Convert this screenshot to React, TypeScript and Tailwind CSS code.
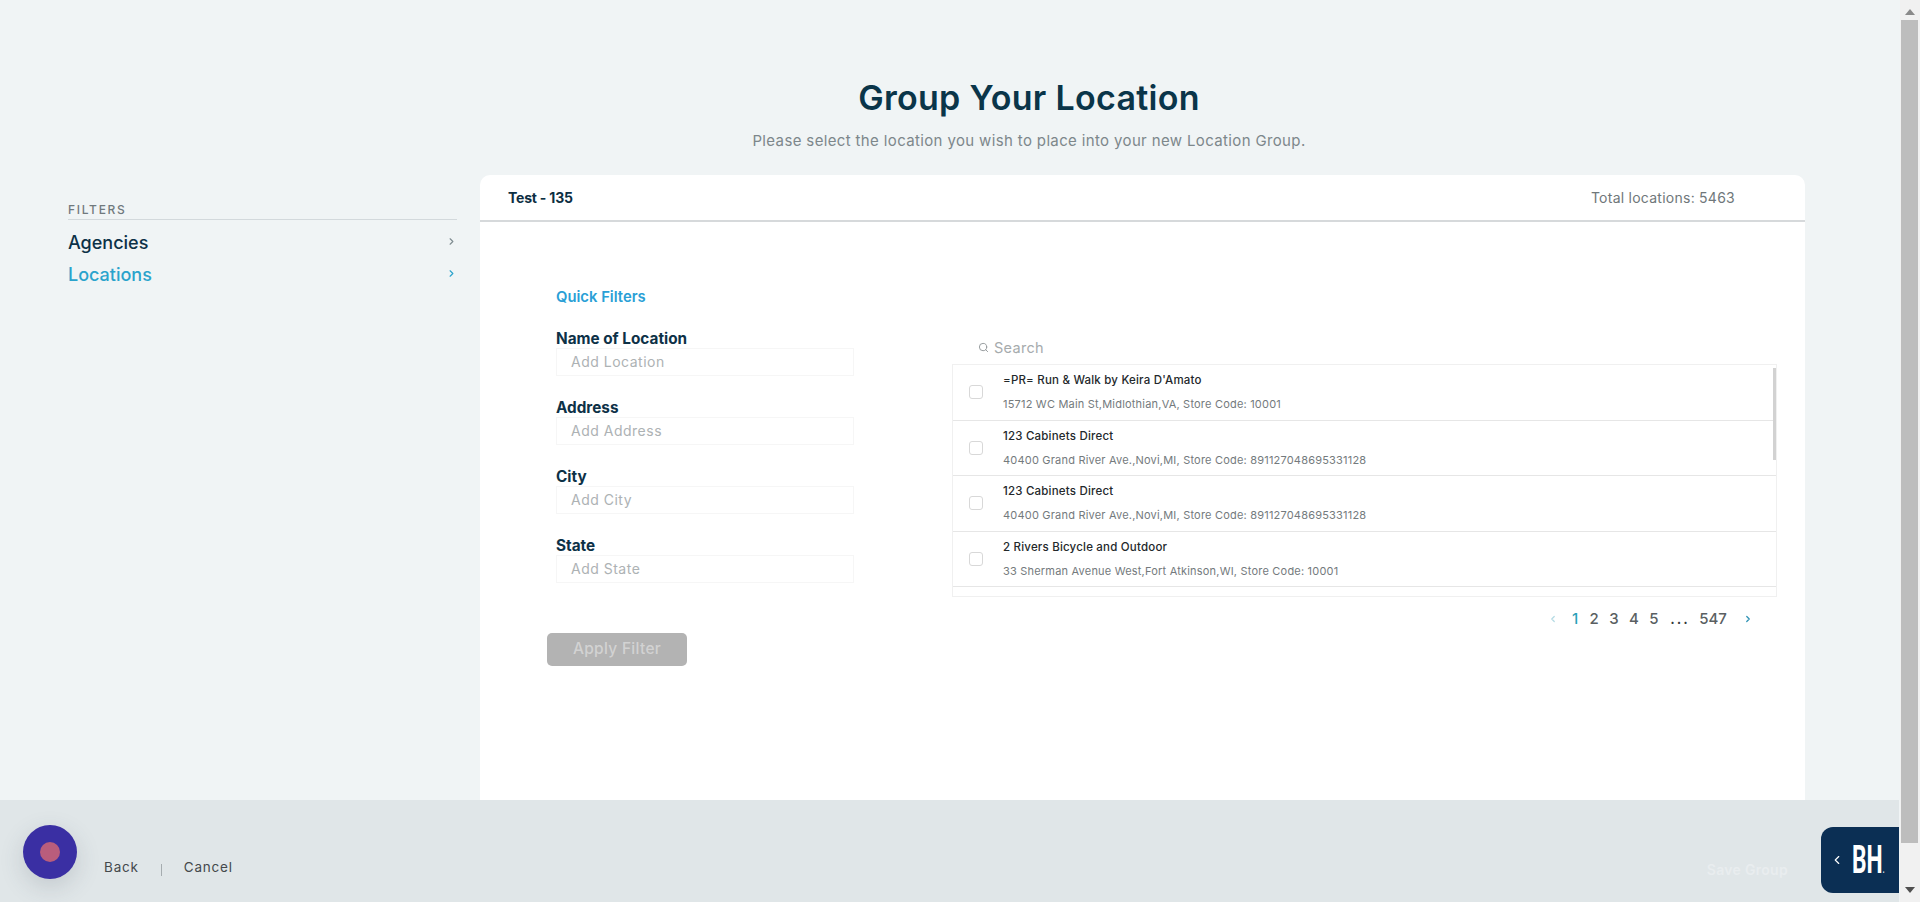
import { ChevronLeft, ChevronRight, Search } from 'lucide-react';

const rows = [
  { name: "=PR= Run & Walk by Keira D'Amato", address: '15712 WC Main St,Midlothian,VA, Store Code: 10001' },
  { name: '123 Cabinets Direct', address: '40400 Grand River Ave.,Novi,MI, Store Code: 891127048695331128' },
  { name: '123 Cabinets Direct', address: '40400 Grand River Ave.,Novi,MI, Store Code: 891127048695331128' },
  { name: '2 Rivers Bicycle and Outdoor', address: '33 Sherman Avenue West,Fort Atkinson,WI, Store Code: 10001' },
];

const filters = [
  { label: 'Name of Location', placeholder: 'Add Location' },
  { label: 'Address', placeholder: 'Add Address' },
  { label: 'City', placeholder: 'Add City' },
  { label: 'State', placeholder: 'Add State' },
];

export default function App() {
  return (
    <div className="flex h-[902px] w-[1920px] overflow-hidden bg-[#f0f4f5] font-['Inter',sans-serif]">
      <div className="flex w-[1900px] flex-col">
        {/* top area */}
        <div className="h-[800px]">
          <header className="pl-[158px] text-center">
            <h1 className="pt-[76px] text-[34px] leading-[44px] font-semibold tracking-[0.3px] text-[#0a3549]">
              Group Your Location
            </h1>
            <p className="mt-[10px] text-[15px] leading-[22px] tracking-[0.36px] text-[#7d878b]">
              Please select the location you wish to place into your new Location Group.
            </p>
          </header>

          <div className="mt-[23px] flex">
            {/* sidebar */}
            <aside className="ml-[68px] w-[389px] pt-[28px]">
              <div className="border-b border-[#d3d9dc] pb-[2px] text-[12px] leading-[14px] font-medium tracking-[1.7px] text-[#70797d]">
                FILTERS
              </div>
              <div className="mt-[6px] flex h-[32px] items-center justify-between text-[18px] font-medium text-[#0c3147]">
                Agencies
                <ChevronRight size={11} strokeWidth={2.5} className="-translate-y-[1px] text-[#7f8c90]" />
              </div>
              <div className="flex h-[32px] items-center justify-between text-[18px] font-medium text-[#2aa3cc]">
                Locations
                <ChevronRight size={11} strokeWidth={2.5} className="-translate-y-[1px]" />
              </div>
            </aside>

            {/* card */}
            <section className="ml-[23px] h-[625px] w-[1325px] rounded-t-[10px] bg-white">
              <div className="flex h-[47px] items-center justify-between border-b-2 border-[#d6d9db] pr-[70px] pl-[28px]">
                <span className="text-[14px] font-bold tracking-[-0.2px] text-[#0c2e42]">Test - 135</span>
                <span className="text-[14px] tracking-[0.25px] text-[#6f777a]">Total locations: 5463</span>
              </div>

              <div className="flex">
                {/* quick filters */}
                <div className="ml-[76px] w-[298px] pt-[65px]">
                  <div className="h-[20px] text-[14.8px] leading-[20px] font-semibold text-[#2a9fd6]">Quick Filters</div>
                  <div className="mt-[23px] flex flex-col gap-[23px]">
                    {filters.map((f) => (
                      <div key={f.label}>
                        <div className="h-[18px] text-[15.3px] leading-[18px] font-bold text-[#0d3147]">{f.label}</div>
                        <div className="flex h-[28px] items-center border border-[#f6f6f6] pb-[2px] pl-[14px] text-[14px] tracking-[0.5px] text-[#adb2b4]">
                          {f.placeholder}
                        </div>
                      </div>
                    ))}
                  </div>
                  <button className="mt-[50px] -ml-[9px] h-[33px] w-[140px] rounded-[5px] bg-[#b3b3b3] pb-[1px] text-[15.5px] font-medium tracking-[0.3px] text-[#d2d2d2]">
                    Apply Filter
                  </button>
                </div>

                {/* location list */}
                <div className="ml-[98px] w-[825px] pt-[113px]">
                  <div className="mb-[3px] flex h-[26px] items-center pl-[26px] text-[14.5px] tracking-[0.3px] text-[#a6abad]">
                    <Search size={11} className="mr-[5px] -translate-y-[1px] text-[#8f9597]" />
                    Search
                  </div>
                  <div className="relative h-[233px] overflow-hidden border border-[#f0f0f0]">
                    {rows.map((r, i) => (
                      <div key={i} className="flex h-[55.5px] items-center border-b border-[#e6e6e6] bg-white">
                        <div className="ml-[16px] h-[14px] w-[14px] rounded-[3px] border border-[#d8d8d8]" />
                        <div className="ml-[20px]">
                          <div className="text-[11.5px] leading-[16px] font-medium tracking-[0.2px] text-[#23282b]">{r.name}</div>
                          <div className="mt-[8px] text-[11px] leading-[16px] tracking-[0.2px] text-[#747a7d]">{r.address}</div>
                        </div>
                      </div>
                    ))}
                    <div className="absolute top-[3px] right-0 h-[92px] w-[3px] bg-[#d2d2d2]" />
                  </div>
                  <div className="mt-[11px] flex h-[22px] items-center justify-end pr-[11px] text-[15px] font-medium text-[#5a5f62]">
                    <span className="flex w-[26px] justify-center"><ChevronLeft size={10} strokeWidth={3} className="text-[#b5dbe4]" /></span>
                    <span className="w-[18px] text-center text-[#2a9fb8]">1</span>
                    <span className="w-[20px] text-center">2</span>
                    <span className="w-[20px] text-center">3</span>
                    <span className="w-[20px] text-center">4</span>
                    <span className="w-[20px] text-center">5</span>
                    <span className="w-[32px] text-center tracking-[2px] text-[#33383a]">...</span>
                    <span className="w-[34px] text-center">547</span>
                    <span className="flex w-[36px] justify-center"><ChevronRight size={10} strokeWidth={3} className="text-[#2f93b5]" /></span>
                  </div>
                </div>
              </div>
            </section>
          </div>
        </div>

        {/* footer */}
        <footer className="flex h-[102px] w-[1899px] bg-[#e0e6e8]">
          <div className="mt-[25px] ml-[23px] flex h-[54px] w-[54px] items-center justify-center rounded-full bg-[#3a2fa3] shadow-[0_8px_24px_rgba(60,70,90,0.18)]">
            <div className="h-[20px] w-[20px] rounded-full bg-[#b95d7c]" />
          </div>
          <div className="mt-[58px] ml-[27px] flex h-[18px] items-center text-[13.5px] tracking-[0.8px] text-[#44494c]">
            <span>Back</span>
            <span className="mx-[22px] mt-[5px] h-[12px] w-px bg-[#a5acaf]" />
            <span>Cancel</span>
          </div>
          <div className="mt-[59px] ml-auto h-[20px] text-[14px] font-semibold tracking-[0.3px] text-[#e9edef]">Save Group</div>
          <div className="mt-[27px] ml-[33px] flex h-[66px] w-[78px] shrink-0 items-center rounded-l-[12px] bg-[#0b2f54] pl-[9px] text-white">
            <ChevronLeft size={14} strokeWidth={2} className="shrink-0" />
            <span className="ml-[8px] shrink-0 origin-left scale-x-[0.6] font-['Roboto',sans-serif] text-[38px] leading-none font-bold">
              BH<span className="text-[10px]">.</span>
            </span>
          </div>
        </footer>
      </div>

      {/* page scrollbar */}
      <div className="flex h-full w-[20px] flex-col items-center bg-[#f1f1f1]">
        <svg width="10" height="6" viewBox="0 0 10 6" className="mt-[9px] mb-[5px] shrink-0"><path d="M5 0 L10 6 H0 Z" fill="#8a8a8a" /></svg>
        <div className="ml-[-2px] h-[823px] w-[17px] bg-[#bdbdbd]" />
        <svg width="10" height="6" viewBox="0 0 10 6" className="mt-[44px] shrink-0"><path d="M0 0 H10 L5 6 Z" fill="#505050" /></svg>
      </div>
    </div>
  );
}
